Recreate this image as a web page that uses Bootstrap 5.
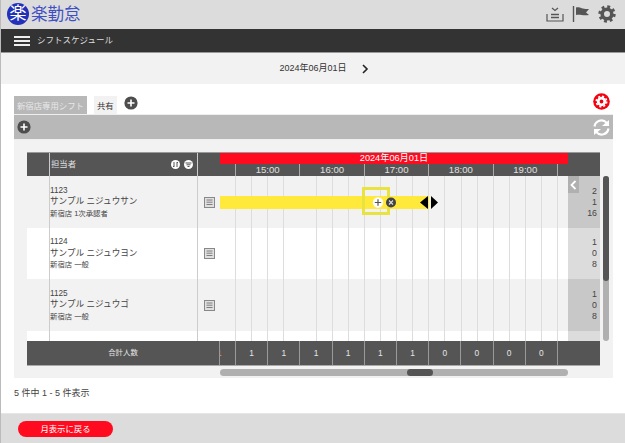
<!DOCTYPE html>
<html lang="ja">
<head>
<meta charset="UTF-8">
<title>シフトスケジュール</title>
<link href="https://cdn.jsdelivr.net/npm/bootstrap@5.3.0/dist/css/bootstrap.min.css" rel="stylesheet">
<style>
html, body { height: 100%; overflow: hidden; }
body { font-family: "Liberation Sans", "Noto Sans CJK JP", sans-serif; font-size: 9px; color: #444; background: #fff; border-left: 1px solid #bbb; }
.top-strip { height: 29px; background: #dcdcdc; padding: 0 9px 2px 6px; }
.logo-mark { width: 22px; height: 22px; border-radius: 50%; background: #2231b8; color: #fff; font-size: 17px; line-height: 22px; text-align: center; }
.logo-name { color: #3f4fc4; font-size: 16.5px; line-height: 22px; margin-left: 2px; }
.top-tools { gap: 8px; }
.menu-bar { height: 24px; background: #333; border-bottom: 1px solid #999; color: #ddd; padding-left: 13px; font-size: 8.5px; gap: 7px; }
.burger { width: 16px; }
.burger i { display: block; height: 2px; background: #eee; margin: 2px 0; }
.date-bar { height: 31px; background: #f2f2f2; color: #333; font-size: 9px; gap: 14px; padding-left: 22px; }
.sheet { padding: 12px 12px 0 13px; height: 329px; }
.tab-row { height: 18px; position: relative; }
.sheet-tab { height: 18px; font-size: 8.4px; line-height: 20px; padding: 0 3px; white-space: nowrap; }
.sheet-tab.on { background: #b8b8b8; color: #e8e8e8; }
.sheet-tab.off { background: #f2f2f2; color: #333; margin-left: 7px; }
.round-add { width: 14px; height: 14px; }
.tab-add { margin-left: 7px; }
.tab-gear { position: absolute; left: 579px; top: -3px; }
.tool-row { height: 26px; width: 599px; background: #b8b8b8; border-top: 1px solid #eee; border-bottom: 1px solid #eee; padding: 0 3px; }
.panel { background: #f2f2f2; height: 238px; padding: 12px 13px; position: relative; width: 599px; }
.cal { width: 573px; }
.cal-head { height: 24px; background: #555; border-top: 1px solid #999; color: #e0e0e0; }
.c-blank { width: 23px; flex: none; border-right: 1px solid #ccc; }
.c-who { width: 148px; flex: none; border-right: 1px solid #ccc; }
.cal-head .c-who { padding: 0 4px 0 1px; }
.head-label { font-size: 8.4px; }
.c-memo { width: 22px; flex: none; }
.c-chart { width: 348px; flex: none; position: relative; }
.c-sum { width: 32px; flex: none; position: relative; }
.day-band { height: 11px; background: #ff0a1e; color: #fff; font-size: 9.2px; line-height: 11px; text-align: center; }
.hours { height: 12px; }
.hours span { width: 64.4px; flex: none; text-align: center; font-size: 9.6px; line-height: 12px; border-right: 1px solid #aaa; }
.hours span:first-child { width: 16px; }
.cal-row { background: #fff; }
.cal-row.alt { background: #f2f2f2; }
.cal-row .c-chart { background-image: repeating-linear-gradient(to right, transparent 0, transparent 15.1px, #ddd 15.1px, #ddd 16.1px); }
.cal-row .c-who { line-height: 11.6px; font-size: 7.4px; color: #444; }
.emp-no { font-size: 8.2px; }
.emp-name { font-size: 8.6px; }
.cal-row .c-sum { background: #dcdcdc; text-align: right; padding-right: 3px; line-height: 11px; font-size: 8.8px; color: #444; }
.cal-row.alt .c-sum { background: #c8c8c8; }
.memo-ico { width: 11px; height: 11px; margin-left: 6px; }
.shift-bar { position: absolute; left: 0; top: 20px; height: 13px; width: 209px; background: #ffe93b; }
.drop-box { position: absolute; left: 142px; top: 11px; width: 28px; height: 28px; border: 3px solid #e9e342; }
.bar-ico { position: absolute; top: 20px; }
.side-fold { position: absolute; left: 0; top: 0; width: 11px; height: 17px; background: #b0b0b0; }
.cal-foot { height: 25px; background: #555; color: #e6e6e6; border-bottom: 1px solid #aaa; font-size: 8.4px; line-height: 24px; text-align: center; }
.f-label { width: 193px; flex: none; border-right: 1px solid #999; font-size: 7.4px; }
.f-edge { width: 16px; flex: none; border-right: 1px solid #999; color: #d89a3a; text-align: left; overflow: hidden; text-indent: -3px; }
.f-slot { width: 32.2px; flex: none; border-right: 1px solid #999; }
.h-track { height: 7px; margin: 3px 0 0 193px; width: 348px; background: #b0b0b0; border-radius: 4px; position: relative; }
.h-thumb { position: absolute; left: 187px; top: 0; width: 26px; height: 7px; border-radius: 4px; background: #555; }
.v-track { position: absolute; left: 589px; top: 36px; width: 6px; height: 165px; background: #b0b0b0; border-radius: 3px; }
.v-thumb { height: 105px; background: #555; border-radius: 3px; }
.count-line { font-size: 9px; margin-top: 9px; color: #444; }
.page-foot { height: 30px; background: #dcdcdc; border-top: 1px solid #e6e6e6; padding: 7px 0 0 17px; }
.back-btn { width: 95px; height: 16px; padding: 0; border: 0; border-radius: 8px; background: #ff0a1e; color: #fff; font-size: 8.4px; line-height: 16px; }
</style>
</head>
<body>
<header class="top-strip d-flex justify-content-between align-items-center">
  <div class="d-flex align-items-center">
    <div class="logo-mark">楽</div>
    <div class="logo-name">楽勤怠</div>
  </div>
  <div class="top-tools d-flex align-items-center">
    <svg width="18" height="18" viewBox="0 0 18 18" fill="none" stroke="#555" stroke-width="1.2"><path d="M1 9v7h16V9"/><path d="M5 12.5h8M5 9.5h8" stroke-width="1.4"/><path d="M6 3l3 2.5L12 3"/></svg>
    <svg width="18" height="18" viewBox="0 0 18 18"><path d="M1.5 1v16" stroke="#555" stroke-width="1.4"/><path d="M4 2.5c4-1 6 2 13 1.5l-3 3.5 3 2.5c-6 1-9-1-13 0z" fill="#555"/></svg>
    <svg width="18" height="18" viewBox="0 0 18 18" fill="none" stroke="#555"><circle cx="9" cy="9" r="4.8" stroke-width="3.6"/><circle cx="9" cy="9" r="7.2" stroke-width="3" stroke-dasharray="2.83 2.83"/></svg>
  </div>
</header>

<nav class="menu-bar d-flex align-items-center">
  <div class="burger"><i></i><i></i><i></i></div>
  <span>シフトスケジュール</span>
</nav>

<div class="date-bar d-flex align-items-center justify-content-center">
  <span>2024年06月01日</span>
  <svg width="8" height="10" viewBox="0 0 8 10" fill="none" stroke="#222" stroke-width="1.6"><path d="M2 1l4 4-4 4"/></svg>
</div>

<main class="sheet">
  <div class="tab-row d-flex">
    <div class="sheet-tab on">新宿店専用シフト</div>
    <div class="sheet-tab off">共有</div>
    <svg class="round-add tab-add" viewBox="0 0 14 14"><circle cx="7" cy="7" r="6.6" fill="#4d4d4d"/><path d="M3.5 7h7M7 3.5v7" stroke="#fff" stroke-width="1.6"/></svg>
    <svg class="tab-gear" width="17" height="17" viewBox="0 0 17 17" fill="none"><circle cx="8.5" cy="8.5" r="8.3" fill="#f5000f"/><circle cx="8.5" cy="8.5" r="3.3" stroke="#fff" stroke-width="2.8"/><circle cx="8.5" cy="8.5" r="5.2" stroke="#fff" stroke-width="1.6" stroke-dasharray="2.04 2.04"/></svg>
  </div>
  <div class="tool-row d-flex justify-content-between align-items-center">
    <svg class="round-add" viewBox="0 0 14 14"><circle cx="7" cy="7" r="6.6" fill="#4d4d4d"/><path d="M3.5 7h7M7 3.5v7" stroke="#fff" stroke-width="1.6"/></svg>
    <svg width="17" height="17" viewBox="0 0 17 17" fill="none" stroke="#fff" stroke-width="2.2"><path d="M1.5 7.5a7 7 0 0 1 12.2-3.6"/><path d="M15.5 9.5a7 7 0 0 1-12.2 3.6"/><path d="M9 7h7V1z" fill="#fff" stroke="none"/><path d="M8 10H1v6z" fill="#fff" stroke="none"/></svg>
  </div>

  <section class="panel">
    <div class="cal">
      <div class="cal-head d-flex">
        <div class="c-blank"></div>
        <div class="c-who d-flex align-items-center justify-content-between">
          <span class="head-label">担当者</span>
          <span class="d-flex gap-1">
            <svg width="9" height="9" viewBox="0 0 9 9"><circle cx="4.5" cy="4.5" r="4.5" fill="#fff"/><path d="M3 2v5M6 2v5M3 7l-1-1M6 2l1 1" stroke="#555"/></svg>
            <svg width="9" height="9" viewBox="0 0 9 9"><circle cx="4.5" cy="4.5" r="4.5" fill="#fff"/><path d="M1.5 3h6M2.5 4.8h4M3.5 6.5h2" stroke="#555"/></svg>
          </span>
        </div>
        <div class="c-memo"></div>
        <div class="c-chart">
          <div class="day-band">2024年06月01日</div>
          <div class="hours d-flex">
            <span></span><span>15:00</span><span>16:00</span><span>17:00</span><span>18:00</span><span>19:00</span>
          </div>
        </div>
        <div class="c-sum"></div>
      </div>

      <div class="cal-row alt d-flex" style="height:52px">
        <div class="c-blank"></div>
        <div class="c-who d-flex flex-column justify-content-center">
          <div class="emp-no">1123</div><div class="emp-name">サンプル ニジュウサン</div><div>新宿店 1次承認者</div>
        </div>
        <div class="c-memo d-flex align-items-center">
          <svg class="memo-ico" viewBox="0 0 11 11" fill="#e0e0e0" stroke="#888"><rect x=".5" y=".5" width="10" height="10"/><path d="M2.5 3h6M2.5 5.2h6M2.5 7.5h6" stroke="#666" stroke-width=".8"/></svg>
        </div>
        <div class="c-chart">
          <div class="shift-bar"></div>
          <div class="drop-box"></div>
          <svg class="bar-ico" style="left:152px" width="12" height="13" viewBox="0 0 12 13"><circle cx="6" cy="6.5" r="5.2" fill="#fff"/><path d="M2.8 6.5h6.4M6 3.3v6.4" stroke="#555" stroke-width="1.2"/></svg>
          <svg class="bar-ico" style="left:166px" width="10" height="13" viewBox="0 0 10 13"><circle cx="5" cy="6.5" r="5" fill="#444"/><path d="M3 4.5l4 4M7 4.5l-4 4" stroke="#ddd" stroke-width="1.1"/></svg>
          <svg class="bar-ico" style="left:200px" width="9" height="13" viewBox="0 0 9 13"><path d="M8 0v13L0 6.5z" fill="#000"/></svg>
          <svg class="bar-ico" style="left:211px" width="8" height="13" viewBox="0 0 8 13"><path d="M0 0v13l7-6.5z" fill="#000"/></svg>
        </div>
        <div class="c-sum d-flex flex-column justify-content-center">
          <div class="side-fold d-flex align-items-center justify-content-center">
            <svg width="7" height="10" viewBox="0 0 7 10" fill="none" stroke="#fff" stroke-width="1.8"><path d="M5.5 1L1.5 5l4 4"/></svg>
          </div>
          <div>2</div><div>1</div><div>16</div>
        </div>
      </div>

      <div class="cal-row d-flex" style="height:51px">
        <div class="c-blank"></div>
        <div class="c-who d-flex flex-column justify-content-center">
          <div class="emp-no">1124</div><div class="emp-name">サンプル ニジュウヨン</div><div>新宿店 一般</div>
        </div>
        <div class="c-memo d-flex align-items-center">
          <svg class="memo-ico" viewBox="0 0 11 11" fill="#e0e0e0" stroke="#888"><rect x=".5" y=".5" width="10" height="10"/><path d="M2.5 3h6M2.5 5.2h6M2.5 7.5h6" stroke="#666" stroke-width=".8"/></svg>
        </div>
        <div class="c-chart"></div>
        <div class="c-sum d-flex flex-column justify-content-center"><div>1</div><div>0</div><div>8</div></div>
      </div>

      <div class="cal-row alt d-flex" style="height:52px">
        <div class="c-blank"></div>
        <div class="c-who d-flex flex-column justify-content-center">
          <div class="emp-no">1125</div><div class="emp-name">サンプル ニジュウゴ</div><div>新宿店 一般</div>
        </div>
        <div class="c-memo d-flex align-items-center">
          <svg class="memo-ico" viewBox="0 0 11 11" fill="#e0e0e0" stroke="#888"><rect x=".5" y=".5" width="10" height="10"/><path d="M2.5 3h6M2.5 5.2h6M2.5 7.5h6" stroke="#666" stroke-width=".8"/></svg>
        </div>
        <div class="c-chart"></div>
        <div class="c-sum d-flex flex-column justify-content-center"><div>1</div><div>0</div><div>8</div></div>
      </div>

      <div class="cal-row d-flex" style="height:10px">
        <div class="c-blank"></div><div class="c-who"></div><div class="c-memo"></div><div class="c-chart"></div><div class="c-sum"></div>
      </div>

      <div class="cal-foot d-flex">
        <div class="f-label">合計人数</div>
        <div class="f-edge">1</div>
        <div class="f-slot">1</div><div class="f-slot">1</div><div class="f-slot">1</div><div class="f-slot">1</div><div class="f-slot">1</div><div class="f-slot">1</div>
        <div class="f-slot">0</div><div class="f-slot">0</div><div class="f-slot">0</div><div class="f-slot">0</div>
      </div>
      <div class="h-track"><div class="h-thumb"></div></div>
    </div>
    <div class="v-track"><div class="v-thumb"></div></div>
  </section>

  <div class="count-line">5 件中 1 - 5 件表示</div>
</main>

<footer class="page-foot">
  <button type="button" class="btn back-btn">月表示に戻る</button>
</footer>
<script src="https://cdn.jsdelivr.net/npm/bootstrap@5.3.0/dist/js/bootstrap.bundle.min.js"></script>
</body>
</html>
